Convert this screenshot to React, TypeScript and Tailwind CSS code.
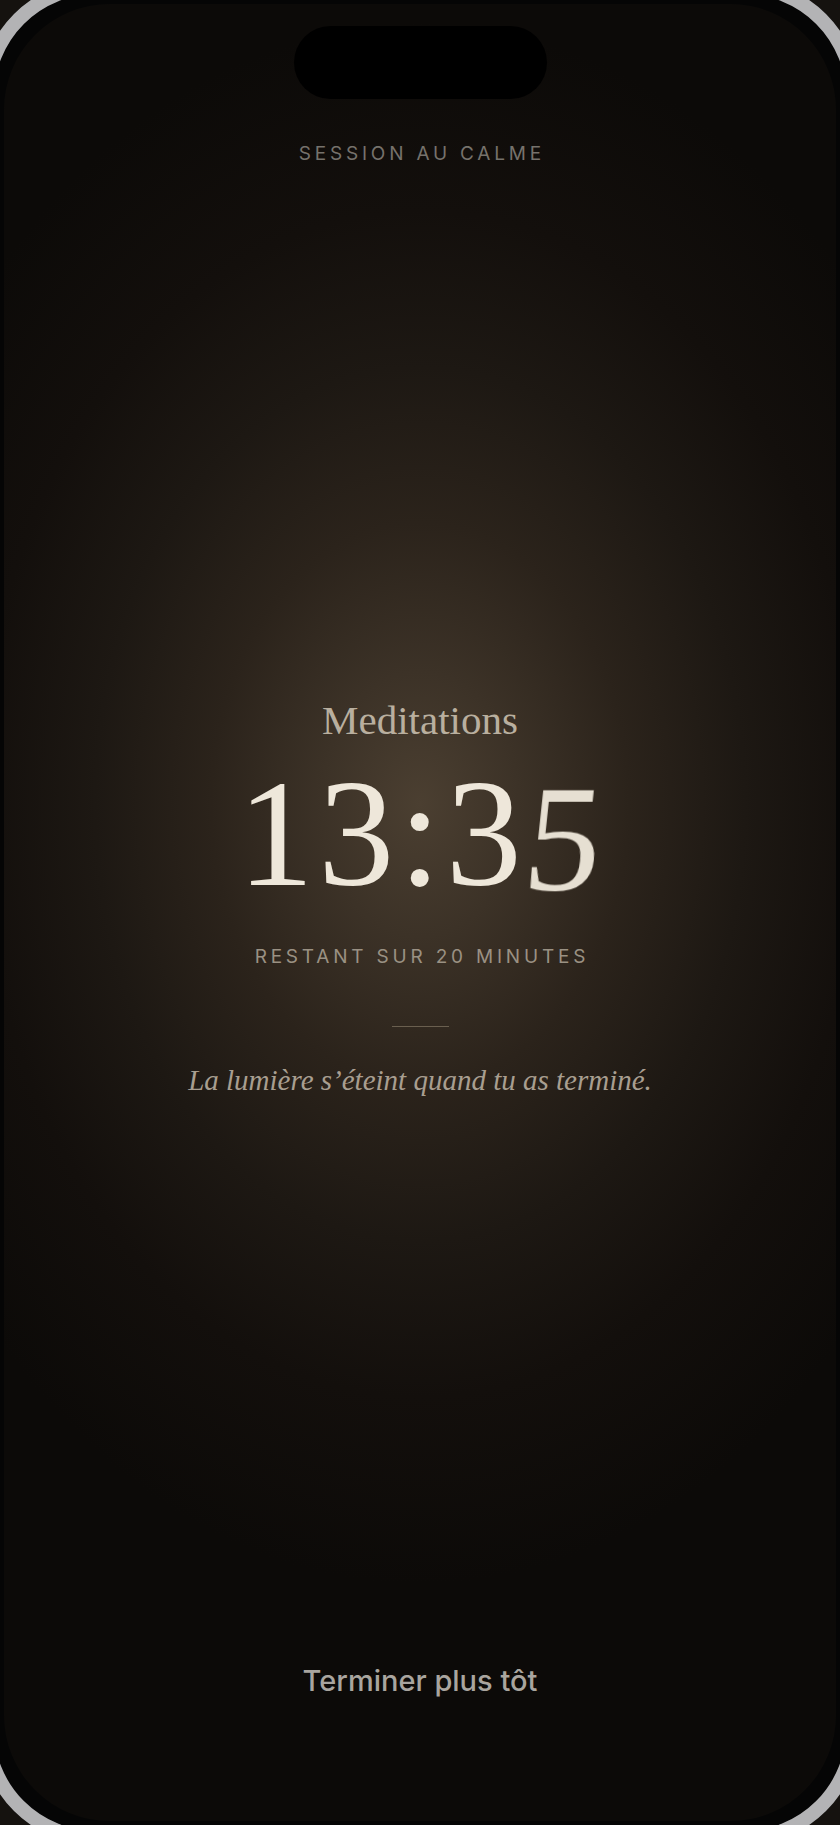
import React from "react";

const sans = "font-['Inter','Liberation_Sans',sans-serif]";
const serif = "font-['Liberation_Serif','Times_New_Roman',serif]";

export default function App() {
  return (
    <div className="relative h-[1825px] w-full overflow-hidden bg-[#050505]">
      <div className="m-[4px] flex h-[1817px] flex-col items-center rounded-[106px] bg-[radial-gradient(ellipse_580px_780px_at_50%_800px,#4b3f31_0%,#3c3227_17%,#2b231b_36%,#1d1813_56%,#130f0c_76%,#0c0a08_100%)]">
        <div className="mt-[22px] h-[73px] w-[253px] shrink-0 rounded-full bg-black" />
        <div
          className={`${sans} mt-[45px] text-[19px] leading-[19px] tracking-[0.2em] text-[#76726c] pl-[0.2em]`}
        >
          SESSION AU CALME
        </div>
        <div className={`${serif} mt-[537px] text-[41px] leading-[41px] text-[#b9af9f]`}>
          Meditations
        </div>
        <div
          className={`${serif} mt-[17px] pl-[0.03em] text-[152px] leading-[152px] tracking-[0.03em] text-[#eee7da]`}
        >
          13:3
          <span className="inline-block translate-y-[5px] -skew-x-6 blur-[0.5px] text-[#e6dfd2]">5</span>
        </div>
        <div
          className={`${sans} mt-[37px] pl-[0.2em] text-[19px] leading-[19px] tracking-[0.2em] text-[#9a9183]`}
        >
          RESTANT SUR 20 MINUTES
        </div>
        <div className="mt-[60px] h-px w-[57px] bg-[#6a5f4f]" />
        <div className={`${serif} mt-[39px] text-[29px] italic leading-[29px] text-[#a89e90]`}>
          La lumière s’éteint quand tu as terminé.
        </div>
        <div className={`${sans} mt-[571px] text-[29px] font-medium leading-[29px] text-[#a9a59f]`}>
          Terminer plus tôt
        </div>
      </div>
      <div className="pointer-events-none absolute -inset-[20px] rounded-[116px] border-[14px] border-[#b3b3b5] shadow-[0_0_0_80px_#15120f]" />
    </div>
  );
}
